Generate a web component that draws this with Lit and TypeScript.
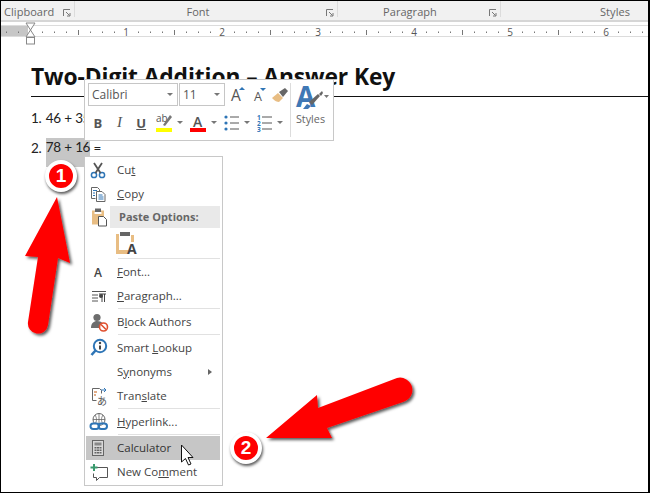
import { LitElement, html, css, svg } from "lit";
import { customElement } from "lit/decorators.js";

const launcher = html`<svg class="launch" width="8" height="8" viewBox="0 0 8 8"><path d="M.5 7V.5H7M3 3l3.500 3.500M7 4v3H4" fill="none" stroke="#777"/></svg>`;

const ic = {
  cut: svg`<circle cx="5" cy="15" r="2.600" fill="none" stroke="#2e75b6" stroke-width="1.500"/><circle cx="13" cy="15" r="2.600" fill="none" stroke="#2e75b6" stroke-width="1.500"/><path d="M6.500 13L13 3M11.500 13L5 3" stroke="#555" stroke-width="1.800" fill="none"/>`,
  copy: svg`<path d="M2.500 3.500h6l2 2v2M2.500 3.500v11h4" fill="#fff" stroke="#666"/><path d="M7.500 7.500h5.500l3 3v7h-8.500z" fill="#fff" stroke="#666"/><path d="M4 6.500h4M4 9h2M4 11.500h2M9.500 11h4M9.500 13h5M9.500 15h5" stroke="#2e75b6"/>`,
  paste: svg`<rect x="3" y="3.500" width="12" height="14" fill="#e8bd83"/><rect x="6" y="1.500" width="6" height="3.500" fill="#666"/><rect x="5.500" y="5" width="7" height="2" fill="#fff"/><path d="M9.500 9.500h5l3 3v6.500h-8z" fill="#fff" stroke="#555"/>`,
  font: svg`<text x="5" y="15" class="glyph">A</text>`,
  para: svg`<path d="M3 5.500h14M3 9h6M3 12h6M3 15h6" stroke="#555"/><path d="M10 8h7M13 8v8M15.500 8v8" stroke="#444" fill="none"/><circle cx="12" cy="10" r="2" fill="#444"/>`,
  block: svg`<circle cx="8" cy="5.500" r="3.600" fill="#6d6d6d"/><path d="M2 16c0-5 3-7 6-7s5 1 6 3v4z" fill="#6d6d6d"/><circle cx="14.500" cy="15" r="4" fill="#fff" stroke="#e0502f" stroke-width="1.600"/><path d="M12 12.500l5 5" stroke="#e0502f" stroke-width="1.600"/>`,
  look: svg`<circle cx="11" cy="8" r="6.200" fill="#fff" stroke="#2e75b6" stroke-width="2"/><path d="M6.500 12.500L2.500 17" stroke="#2e75b6" stroke-width="2.600"/><path d="M11 7.500v4" stroke="#444" stroke-width="2"/><circle cx="11" cy="5" r="1.200" fill="#444"/>`,
  trans: svg`<path d="M3.500 2.500h7l2 2v3M3.500 2.500v12h4" fill="none" stroke="#666"/><path d="M5 6h3M5 9h2" stroke="#c55a11"/><path d="M12 4h5M15 2l2 2-2 2" stroke="#2e75b6" fill="none"/><text x="8" y="18.500" class="kana">あ</text>`,
  link: svg`<circle cx="10" cy="7.500" r="6" fill="none" stroke="#666"/><path d="M4 7.500h12M10 1.500v12M6 3c2 3 2 6 0 9M14 3c-2 3-2 6 0 9" stroke="#666" fill="none" stroke-width=".8"/><rect x="1.500" y="11.500" width="8.500" height="5.500" rx="2.700" fill="#fff" stroke="#2e75b6" stroke-width="2"/><rect x="9.500" y="11.500" width="8.500" height="5.500" rx="2.700" fill="none" stroke="#2e75b6" stroke-width="2"/>`,
  calc: svg`<rect x="3.500" y="2.500" width="11" height="15" fill="#d8d8d8" stroke="#666"/><rect x="5.500" y="4.500" width="7" height="3" fill="#888"/><path d="M5.500 9h2v1.500h-2zM8 9h2v1.500H8zM10.500 9h2v1.500h-2zM5.500 11.500h2V13h-2zM8 11.500h2V13H8zM10.500 11.500h2V13h-2zM5.500 14h2v1.500h-2zM8 14h2v1.500H8zM10.500 14h2v1.500h-2z" fill="#666"/>`,
  comment: svg`<path d="M7 5.500h11.500v10h-8l-3 3v-3H4.500v-4" fill="none" stroke="#555"/><path d="M5 2v7M1.500 5.500h7" stroke="#3a9a6e" stroke-width="2"/>`,
};

type Row =
  | { k: "sep" }
  | { k: "head"; t: string; icon: keyof typeof ic }
  | { k: "pasteA" }
  | { k: "item"; pre: string; u: string; post: string; icon?: keyof typeof ic; sub?: boolean; hot?: boolean };

const rows: Row[] = [
  { k: "item", pre: "Cu", u: "t", post: "", icon: "cut" },
  { k: "item", pre: "", u: "C", post: "opy", icon: "copy" },
  { k: "head", t: "Paste Options:", icon: "paste" },
  { k: "pasteA" },
  { k: "sep" },
  { k: "item", pre: "", u: "F", post: "ont...", icon: "font" },
  { k: "item", pre: "", u: "P", post: "aragraph...", icon: "para" },
  { k: "sep" },
  { k: "item", pre: "B", u: "l", post: "ock Authors", icon: "block" },
  { k: "sep" },
  { k: "item", pre: "Smart ", u: "L", post: "ookup", icon: "look" },
  { k: "item", pre: "S", u: "y", post: "nonyms", sub: true },
  { k: "item", pre: "Tran", u: "s", post: "late", icon: "trans" },
  { k: "sep" },
  { k: "item", pre: "", u: "H", post: "yperlink...", icon: "link" },
  { k: "sep" },
  { k: "item", pre: "Calculator", u: "", post: "", icon: "calc", hot: true },
  { k: "item", pre: "New Co", u: "m", post: "ment", icon: "comment" },
];

@customElement("app-root")
export class AppRoot extends LitElement {
  static styles = css`
    :host { display: block; width: 650px; height: 493px; position: relative; overflow: hidden; background: #fff; }
    .frame { box-sizing: border-box; width: 650px; height: 493px; border: 1px solid #000; border-right-width: 2px; display: flex; flex-direction: column; overflow: hidden; }
    .ribbon { display: flex; height: 19px; flex: none; background: #f1f1f1; border-bottom: 2px solid #d6d6d6; font: 11px "Open Sans", sans-serif; color: #666; letter-spacing: .05px; }
    .grp { position: relative; display: flex; align-items: center; justify-content: center; border-right: 1px solid #dcdcdc; box-sizing: border-box; margin-bottom: 3px; padding-top: 5px; }
    .grp.clip { width: 74px; justify-content: flex-start; padding-left: 3px; }
    .grp.fnt { width: 263px; padding-right: 16px; }
    .grp.par { width: 163px; padding-right: 18px; }
    .grp.sty { flex: 1; border: 0; justify-content: flex-end; padding-right: 18px; }
    .launch { position: absolute; right: 3px; top: 8px; }
    .ruler { display: block; flex: none; margin-top: 3px; }
    .ruler text { font: 10px "Open Sans", sans-serif; fill: #555; text-anchor: middle; }
    .doc { flex: 1; padding: 19px 0 0 30px; color: #222; font: 13.500px Lato, sans-serif; letter-spacing: -.4px; word-spacing: .5px; }
    h1 { margin: 0; font: 700 22.800px "Open Sans", sans-serif; color: #111; height: 38px; line-height: 38px; border-bottom: 1.500px solid #111; letter-spacing: -.1px; word-spacing: 0; }
    p { margin: 0; height: 30px; line-height: 30px; }
    .line1 { margin-top: 6px; }
    .lead { margin-right: 1px; }
    .sel { display: inline-block; background: #c6c6c6; height: 29px; line-height: 18px; vertical-align: top; margin: 5px 0 0 0; }
    .mini { position: absolute; left: 84px; top: 79px; width: 250px; height: 62px; box-sizing: border-box; background: #fff; border: 1px solid #c8c8c8; display: grid; grid-template-columns: 202px 1fr; padding: 3px; font-family: "Open Sans", sans-serif; }
    .mleft { display: flex; flex-direction: column; gap: 4px; }
    .mtop { display: flex; align-items: center; height: 23px; }
    .combo { box-sizing: border-box; height: 23px; border: 1px solid #c6c6c6; display: flex; align-items: center; justify-content: space-between; padding: 0 4px 0 3px; font-size: 12px; color: #555; margin-right: 1px; }
    .combo.name { width: 90px; }
    .combo.size { width: 46px; }
    .car { width: 0; height: 0; border: 3px solid transparent; border-top: 3.500px solid #777; border-bottom: 0; flex: none; }
    .mbtm { display: flex; align-items: center; height: 25px; margin-left: -1px; }
    .b { font: 700 13px "Open Sans", sans-serif; color: #555; width: 22px; text-align: center; }
    .b.i { font: italic 400 15px "Liberation Serif", serif; }
    .b.u { text-decoration: underline; }
    .mbtm svg { flex: none; }
    .mbtm .car { margin: 0 7px 0 5px; }
    .hl { margin-left: 4px; }
    .mstyles { border-left: 1px solid #dcdcdc; display: flex; flex-direction: column; align-items: center; font-size: 10.800px; color: #666; }
    .mstyles svg { margin-top: -8px; }
    .menu { position: absolute; left: 84px; top: 156px; width: 139px; height: 330px; box-sizing: border-box; background: #fff; border: 1px solid #c8c8c8; padding: 1px; font: 11.500px "Open Sans", sans-serif; color: #444; }
    .row { position: relative; box-sizing: border-box; height: 24px; padding-bottom: 2px; display: flex; align-items: center; padding-left: 31px; white-space: pre; }
    .row svg.ico { position: absolute; left: 3px; top: 2px; }
    .row.hot { background: #c6c6c6; color: #333; margin-right: 1px; }
    .sub { position: absolute; right: 9px; top: 9px; width: 0; height: 0; border: 3.500px solid transparent; border-left: 4px solid #666; border-right: 0; }
    .head { box-sizing: border-box; height: 22px; padding-bottom: 2px; margin-left: 24px; margin-right: 1px; padding-left: 9px; background: #e9e9e9; font-weight: 700; font-size: 11px; color: #666; display: flex; align-items: center; position: relative; }
    .head svg { position: absolute; left: -21px; top: 1px; }
    .pa { height: 30px; padding-left: 30px; box-sizing: border-box; }
    .pa svg { display: block; }
    .sep { height: 1px; margin: 0 1px 1px 32px; background: #e1e1e1; }
    .glyph { font: 600 12px "Open Sans", sans-serif; fill: #444; }
    .kana { font: 10px "Noto Sans CJK JP", sans-serif; fill: #555; }
    .num { font: 700 6.500px "Open Sans", sans-serif; fill: #2e75b6; }
    .over { position: absolute; left: 0; top: 0; pointer-events: none; }
    .badge { position: absolute; width: 32px; height: 32px; box-sizing: border-box; border-radius: 50%; background: #f00; border: 4px solid #fff; box-shadow: 1px 2px 3px rgba(0,0,0,.65); color: #fff; display: flex; align-items: center; justify-content: center; font: 700 19px "Liberation Sans", sans-serif; }
    .b1 { left: 45px; top: 160px; }
    .b2 { left: 230px; top: 432px; }
  `;

  private ruler() {
    const marks = [];
    for (let x = 6; x < 648; x += 12) {
      const n = Math.round((x - 29) / 12);
      if (n % 8 === 0) {
        if (n > 0) marks.push(svg`<text x=${x} y="10.500">${n / 8}</text>`);
      } else if (n % 4 === 0) {
        marks.push(svg`<path d="M${x + 0.5} 5v5" stroke="#777"/>`);
      } else {
        marks.push(svg`<path d="M${x + 0.5} 6.500v1.500" stroke="#777"/>`);
      }
    }
    return html`<svg class="ruler" width="647" height="14" viewBox="0 0 647 14">
      <rect x="0" y="1" width="27" height="10" fill="#c6c6c6"/>
      <path d="M0 .5h647M0 11.500h647" stroke="#dcdcdc"/>
      <g transform="translate(-1,0)">${marks}</g>
    </svg>`;
  }

  private renderRow(r: Row) {
    if (r.k === "sep") return html`<div class="sep"></div>`;
    if (r.k === "head")
      return html`<div class="head"><svg width="20" height="20" viewBox="0 0 20 20">${ic[r.icon]}</svg>${r.t}</div>`;
    if (r.k === "pasteA")
      return html`<div class="pa"><svg width="24" height="30" viewBox="0 0 24 30">
        <path d="M0 6h3v16h10v4H0zM15 7h3v7h-3z" fill="#e8bd83"/><rect x="4" y="4" width="10" height="4" fill="#666"/>
        <text x="11" y="26" style="font:700 14px 'Open Sans',sans-serif;fill:#444">A</text></svg></div>`;
    return html`<div class="row ${r.hot ? "hot" : ""}">${r.icon ? html`<svg class="ico" width="20" height="20" viewBox="0 0 20 20">${ic[r.icon]}</svg>` : ""}<span>${r.pre}${r.u ? html`<u>${r.u}</u>` : ""}${r.post}</span>${r.sub ? html`<i class="sub"></i>` : ""}</div>`;
  }

  render() {
    return html`
      <div class="frame">
        <div class="ribbon">
          <div class="grp clip">Clipboard${launcher}</div>
          <div class="grp fnt">Font${launcher}</div>
          <div class="grp par">Paragraph${launcher}</div>
          <div class="grp sty">Styles</div>
        </div>
        ${this.ruler()}
        <div class="doc">
          <h1>Two-Digit Addition – Answer Key</h1>
          <p class="line1"><span class="lead">1. </span>46 + 35 =</p>
          <p><span class="lead">2. </span><span class="sel">78 + 16</span> =</p>
        </div>
      </div>

      <svg class="over" width="650" height="493" viewBox="0 0 650 493">
        <path d="M26 23h9l-4.500 7zM26 37h9l-4.500-7z" fill="#fff" stroke="#888"/>
        <rect x="26.500" y="37.500" width="8" height="6.500" fill="#fff" stroke="#888"/>
      </svg>

      <div class="mini">
        <div class="mleft">
          <div class="mtop">
            <div class="combo name">Calibri<i class="car"></i></div>
            <div class="combo size">11<i class="car"></i></div>
            <svg width="60" height="23" viewBox="0 0 60 23" style="margin-left:3px;flex:none">
              <text x="2" y="18" style="font:400 15.500px 'Open Sans',sans-serif;fill:#555">A</text><path d="M10 7l3-3 3 3z" fill="#2e75b6"/>
              <text x="25" y="18" style="font:400 12.500px 'Open Sans',sans-serif;fill:#555">A</text><path d="M31 5l3 3 3-3z" fill="#2e75b6"/>
              <g transform="translate(43,4)"><path d="M0 11l6-5 5 5-4 4c-2 0-4-1-7-4z" fill="#e8bd83"/><path d="M7 5l6-4 3 3-5 6z" fill="#666"/></g>
            </svg>
          </div>
          <div class="mbtm">
            <span class="b">B</span><span class="b i">I</span><span class="b u">U</span>
            <svg class="hl" width="16" height="22" viewBox="0 0 16 22"><text x="0" y="10" style="font:10px 'Open Sans',sans-serif;fill:#555">ab</text><path d="M7 13L14 3l2 2-7 9z" fill="#777"/><rect x="0" y="16" width="16" height="4" fill="#ff0"/></svg>
            <i class="car"></i>
            <svg width="16" height="22" viewBox="0 0 16 22"><text x="3" y="15" style="font:600 14px 'Open Sans',sans-serif;fill:#555">A</text><rect x="0" y="16" width="16" height="4" fill="#f00"/></svg>
            <i class="car"></i>
            <svg width="15" height="20" viewBox="0 0 15 20"><path d="M6 4h9M6 10h9M6 16h9" stroke="#555"/><circle cx="2" cy="4" r="1.600" fill="#2e75b6"/><circle cx="2" cy="10" r="1.600" fill="#2e75b6"/><circle cx="2" cy="16" r="1.600" fill="#2e75b6"/></svg>
            <i class="car"></i>
            <svg width="15" height="20" viewBox="0 0 15 20"><path d="M5 4h10M5 10h10M5 16h10" stroke="#555"/><text class="num"><tspan x="0" y="7">1</tspan><tspan x="0" y="13">2</tspan><tspan x="0" y="19">3</tspan></text></svg>
            <i class="car"></i>
          </div>
        </div>
        <div class="mstyles">
          <svg width="38" height="36" viewBox="0 -8 38 36">
            <text x="4" y="24" style="font:700 28px 'Open Sans',sans-serif;fill:#3f78b5">A</text>
            <path d="M17 19l9-8 2 2-8 9z" fill="#666"/><path d="M15 21l4 2-3 3-5 0z" fill="#3f78b5"/><path d="M27 11l3-3 1 2-2 3z" fill="#666"/>
            <path d="M32 12h5l-2.500 3z" fill="#777"/>
          </svg>
          <span>Styles</span>
        </div>
      </div>

      <div class="menu">${rows.map((r) => this.renderRow(r))}</div>

      <svg class="over" width="650" height="493" viewBox="0 0 650 493">
        <defs><filter id="sh2" x="-30%" y="-30%" width="170%" height="170%"><feDropShadow dx="2" dy="2" stdDeviation="1.500" flood-color="#000" flood-opacity=".65"/></filter></defs>
        <path filter="url(#sh2)" d="M57 197L70 263 58 258 48 325A10 10 0 0 1 28 322L38 257 25 256Z" fill="#f00"/>
        <path filter="url(#sh2)" d="M266 438L317 395 318 408 397 378A10.500 10.500 0 0 1 403 402L327 428 332 438Z" fill="#f00"/>
        <path d="M181.500 445v17l4-3.500 3 6.500 2.500-1-3-6.500h5z" fill="#fff" stroke="#111"/>
      </svg>
      <div class="badge b1">1</div>
      <div class="badge b2">2</div>
    `;
  }
}
